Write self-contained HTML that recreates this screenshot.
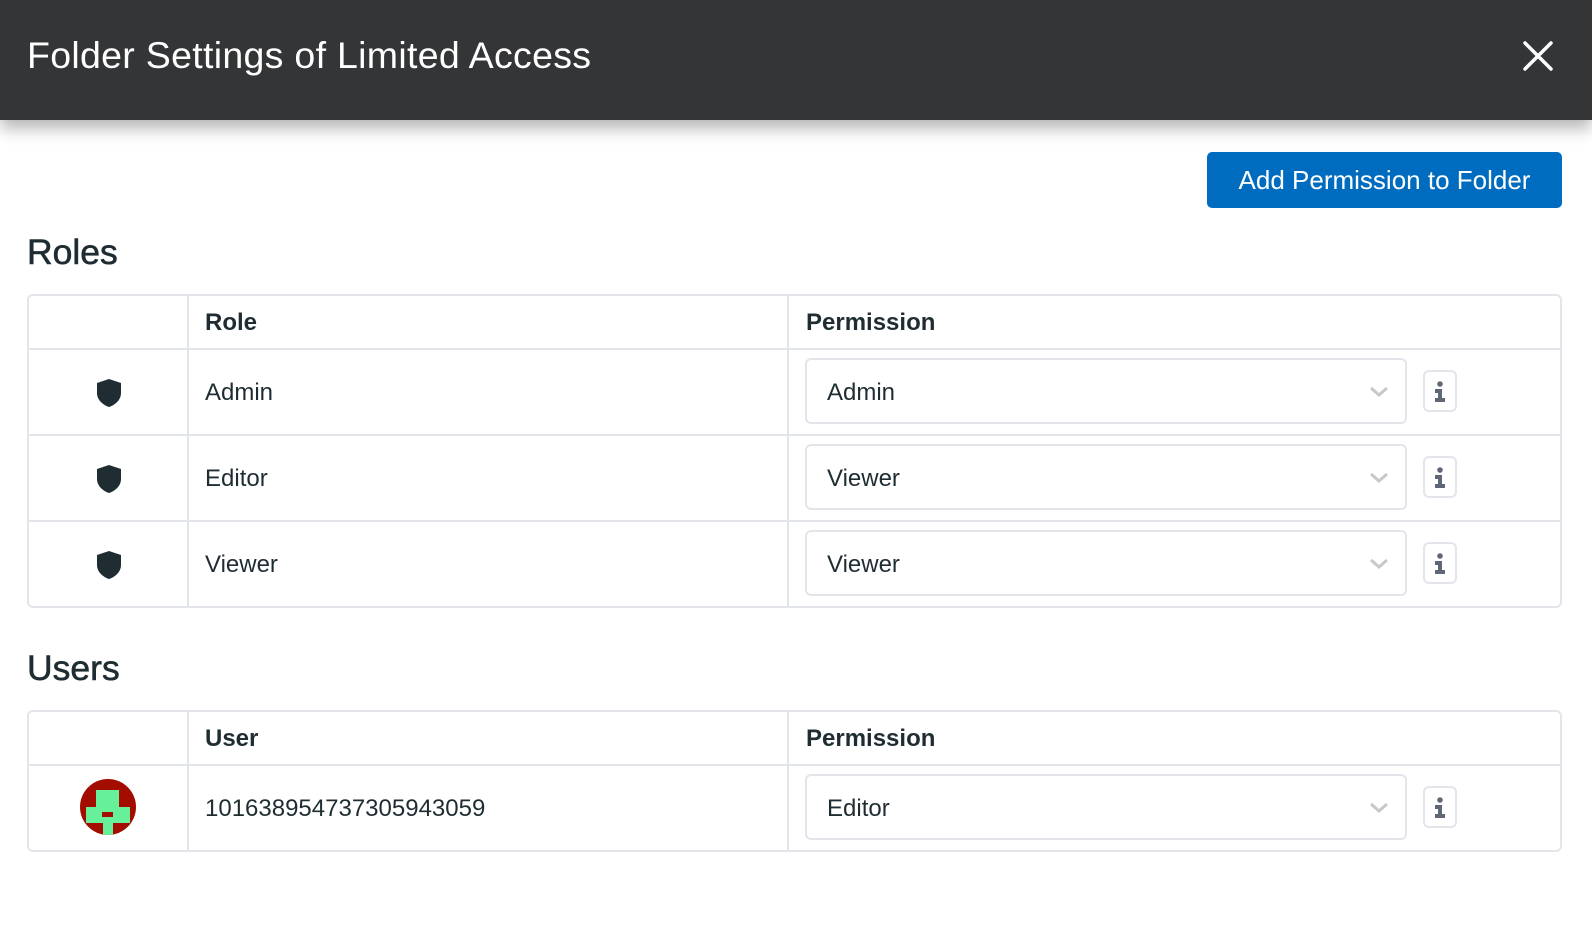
<!DOCTYPE html>
<html><head><style>
*{box-sizing:border-box;margin:0;padding:0}
body{width:1592px;height:934px;background:#fff;font-family:"Liberation Sans",sans-serif;color:#1f2d33;position:relative;overflow:hidden}
.hdr{position:absolute;left:0;top:0;width:1592px;height:120px;background:#343537;box-shadow:0 8px 16px rgba(0,0,0,.3)}
.hdr h1{position:absolute;left:27px;top:34px;font-weight:normal;font-size:37.5px;color:#fff;letter-spacing:.3px}
.btn{position:absolute;left:1207px;top:152px;width:355px;height:56px;background:#006cbf;border-radius:5px;color:#fff;font-size:26px;text-align:center;line-height:56px}
h2{position:absolute;left:27px;font-size:35.5px;font-weight:normal;color:#1f2d33;-webkit-text-stroke:.6px #1f2d33}
.tbl{position:absolute;left:27px;width:1535px;border:2px solid #e2e6ea;border-radius:6px}
.row{position:relative;border-top:2px solid #e2e6ea;height:86px}
.row.h{border-top:none;height:52px}
.c1,.c2{position:absolute;top:0;bottom:0;border-left:2px solid #e2e6ea}
.c1{left:158px}.c2{left:758px}
.t{position:absolute;font-size:24px;line-height:1}
.hd{font-weight:bold}
.sel{position:absolute;left:776px;top:8px;width:602px;height:66px;border:2px solid #e2e6ea;border-radius:6px;font-size:24px;padding:19px 0 0 20px}
.sel svg{position:absolute;right:16px;top:26px}
.info{position:absolute;left:1394px;top:20px;width:34px;height:42px;border:2px solid #e2e6ea;border-radius:6px}
.info svg{position:absolute;left:8px;top:9px}
.shield{position:absolute;left:67px;top:28px}
</style></head><body>
<div class="hdr"><h1>Folder Settings of Limited Access</h1>
<svg style="position:absolute;left:1522px;top:40px" width="32" height="32" viewBox="0 0 32 32"><path d="M3 3L29 29M29 3L3 29" stroke="#fff" stroke-width="3.5" stroke-linecap="round"/></svg></div>
<div class="btn">Add Permission to Folder</div>
<h2 style="top:232px">Roles</h2>
<div class="tbl" style="top:294px">
<div class="row h"><div class="c1"></div><div class="c2"></div><div class="t hd" style="left:176px;top:15px">Role</div><div class="t hd" style="left:777px;top:15px">Permission</div></div>
<div class="row"><div class="c1"></div><div class="c2"></div><svg class="shield" width="26" height="30" viewBox="0 0 26 30"><path d="M13 1L25 5V15C25 22 19 27 13 29C7 27 1 22 1 15V5Z" fill="#1f2d33"/></svg><div class="t" style="left:176px;top:31px">Admin</div><div class="sel">Admin<svg width="20" height="12"><path d="M2 2L10 9L18 2" stroke="#c8c8c8" stroke-width="3" fill="none"/></svg></div><div class="info"><svg width="14" height="22"><circle cx="7" cy="3" r="2.8" fill="#5f6676"/><path d="M2 8H9V17H12V21H2V17H5V12H2Z" fill="#5f6676"/></svg></div></div>
<div class="row"><div class="c1"></div><div class="c2"></div><svg class="shield" width="26" height="30" viewBox="0 0 26 30"><path d="M13 1L25 5V15C25 22 19 27 13 29C7 27 1 22 1 15V5Z" fill="#1f2d33"/></svg><div class="t" style="left:176px;top:31px">Editor</div><div class="sel">Viewer<svg width="20" height="12"><path d="M2 2L10 9L18 2" stroke="#c8c8c8" stroke-width="3" fill="none"/></svg></div><div class="info"><svg width="14" height="22"><circle cx="7" cy="3" r="2.8" fill="#5f6676"/><path d="M2 8H9V17H12V21H2V17H5V12H2Z" fill="#5f6676"/></svg></div></div>
<div class="row"><div class="c1"></div><div class="c2"></div><svg class="shield" width="26" height="30" viewBox="0 0 26 30"><path d="M13 1L25 5V15C25 22 19 27 13 29C7 27 1 22 1 15V5Z" fill="#1f2d33"/></svg><div class="t" style="left:176px;top:31px">Viewer</div><div class="sel">Viewer<svg width="20" height="12"><path d="M2 2L10 9L18 2" stroke="#c8c8c8" stroke-width="3" fill="none"/></svg></div><div class="info"><svg width="14" height="22"><circle cx="7" cy="3" r="2.8" fill="#5f6676"/><path d="M2 8H9V17H12V21H2V17H5V12H2Z" fill="#5f6676"/></svg></div></div>
</div>
<h2 style="top:648px">Users</h2>
<div class="tbl" style="top:710px">
<div class="row h"><div class="c1"></div><div class="c2"></div><div class="t hd" style="left:176px;top:15px">User</div><div class="t hd" style="left:777px;top:15px">Permission</div></div>
<div class="row"><div class="c1"></div><div class="c2"></div>
<svg style="position:absolute;left:51px;top:13px" width="56" height="56" viewBox="0 0 56 56"><defs><clipPath id="cc"><circle cx="28" cy="28" r="28"/></clipPath></defs><g clip-path="url(#cc)"><rect width="56" height="56" fill="#a30d00"/><path d="M16 11H39V28H50V44H33V56H23V44H6V28H16Z" fill="#67f09a"/><rect x="22" y="33" width="11" height="5" fill="#a30d00"/></g></svg>
<div class="t" style="left:176px;top:31px">101638954737305943059</div><div class="sel">Editor<svg width="20" height="12"><path d="M2 2L10 9L18 2" stroke="#c8c8c8" stroke-width="3" fill="none"/></svg></div><div class="info"><svg width="14" height="22"><circle cx="7" cy="3" r="2.8" fill="#5f6676"/><path d="M2 8H9V17H12V21H2V17H5V12H2Z" fill="#5f6676"/></svg></div></div>
</div>
</body></html>
